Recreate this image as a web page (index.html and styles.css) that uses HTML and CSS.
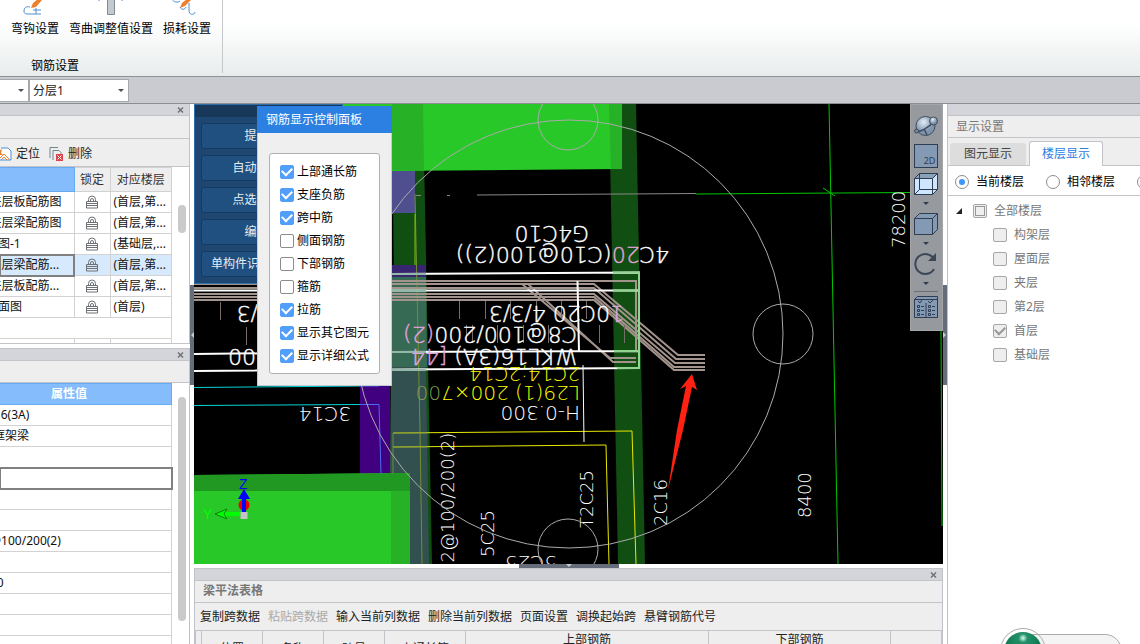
FILE: index.html
```html
<!DOCTYPE html>
<html lang="zh-CN">
<head>
<meta charset="utf-8">
<title>钢筋显示</title>
<link rel="stylesheet" href="styles.css">
</head>
<body>
<header class="ribbon">
  <div class="ribbon-group">
    <div class="ribbon-buttons">
      <button class="ribbon-btn"><svg width="32" height="15" viewBox="0 0 32 15"><path d="M11 7c-4-1-6 1-6 4s2 3 5 3h12M17 14V8M14 10h8" fill="none" stroke="#4a8fd6"/><path d="M12 8l2-5 5-4 4 1-6 7z" fill="#ee7f2d"/></svg><span>弯钩设置</span></button>
      <button class="ribbon-btn"><svg width="32" height="15" viewBox="0 0 32 15"><path d="M12.500-2h7v16.500h-7z" fill="#c3c9cc" stroke="#7f8c93"/><path d="M4 0v1M27 0v1" stroke="#4a8fd6"/></svg><span>弯曲调整值设置</span></button>
      <button class="ribbon-btn"><svg width="32" height="15" viewBox="0 0 32 15"><path d="M2 0c0 2 5 3 7 1M9 7c1 3 5 3 6 0M18 3v7c0 6 6 5 6 2" fill="none" stroke="#4a8fd6"/><path d="M9 8l2-5 5-4 4 1-6 6z" fill="#ee7f2d"/></svg><span>损耗设置</span></button>
    </div>
    <div class="ribbon-caption">钢筋设置</div>
  </div>
</header>
<div class="floorbar">
  <div class="combo combo-floor"><select aria-label="楼层"><option></option></select></div>
  <div class="combo combo-layer"><select aria-label="分层"><option>分层1</option></select></div>
</div>
<main class="workspace">
  <aside class="left">
    <section class="panel drawings">
      <div class="grip"><button class="close" aria-label="关闭"><svg width="8" height="8" viewBox="0 0 8 8"><use href="#cross"/></svg></button></div>
      <div class="spacer"></div>
      <div class="tools">
        <button class="tool"><svg class="tool-icon" width="16" height="16" viewBox="0 0 16 16"><path d="M5 2h7l3 3v9H2" fill="#fff" stroke="#4a8fd6"/><path d="M0 3l3 2 3-2-1 4 2 2H0z" fill="#ee7f2d"/><path d="M2 14l6-6 6 6M5 14l3-3 3 3" fill="none" stroke="#ee7f2d"/></svg>定位</button>
        <button class="tool"><svg class="tool-icon" width="16" height="16" viewBox="0 0 16 16"><path d="M2 12V1.500h8M5 14V4.500h6l2 2V8" fill="none" stroke="#6f858d"/><path d="M8 8h7v7H8z" fill="#d9434b"/><path d="M9.500 9.500l4 4M13.500 9.500l-4 4" stroke="#fff"/></svg>删除</button>
      </div>
      <div class="scroll-area drawings-area">
        <table class="grid drawing-grid">
          <colgroup><col class="c-name"><col class="c-lock"><col class="c-floor"></colgroup>
          <thead><tr><th class="blue"></th><th>锁定</th><th>对应楼层</th></tr></thead>
          <tbody>
            <tr><td>(夹层板配筋图</td><td class="lock"><svg viewBox="0 0 12 14"><use href="#lock"/></svg></td><td>(首层,第...</td></tr>
            <tr><td>(夹层梁配筋图</td><td class="lock"><svg viewBox="0 0 12 14"><use href="#lock"/></svg></td><td>(首层,第...</td></tr>
            <tr><td>面图-1</td><td class="lock"><svg viewBox="0 0 12 14"><use href="#lock"/></svg></td><td>(基础层,...</td></tr>
            <tr class="selected"><td>(夹层梁配筋...</td><td class="lock"><svg viewBox="0 0 12 14"><use href="#lock"/></svg></td><td>(首层,第...</td></tr>
            <tr><td>(夹层板配筋...</td><td class="lock"><svg viewBox="0 0 12 14"><use href="#lock"/></svg></td><td>(首层,第...</td></tr>
            <tr><td>平面图</td><td class="lock"><svg viewBox="0 0 12 14"><use href="#lock"/></svg></td><td>(首层)</td></tr>
            <tr><td colspan="3"></td></tr>
            <tr><td></td><td></td><td></td></tr>
          </tbody>
        </table>
        <div class="thumb thumb-short"></div>
      </div>
    </section>
    <section class="panel props">
      <div class="grip"><button class="close" aria-label="关闭"><svg width="8" height="8" viewBox="0 0 8 8"><use href="#cross"/></svg></button></div>
      <div class="spacer"></div>
      <div class="scroll-area">
        <table class="grid prop-grid">
          <thead><tr><th class="blue">属性值</th></tr></thead>
          <tbody>
            <tr><td>WKL16(3A)</td></tr>
            <tr><td>楼层框架梁</td></tr>
            <tr><td></td></tr>
            <tr class="editing"><td></td></tr>
            <tr><td></td></tr>
            <tr><td></td></tr>
            <tr><td>C10@100/200(2)</td></tr>
            <tr><td></td></tr>
            <tr><td>-0.300</td></tr>
            <tr><td></td></tr>
            <tr><td></td></tr>
            <tr><td></td></tr>
          </tbody>
        </table>
        <div class="thumb thumb-long"></div>
      </div>
    </section>
  </aside>
  <div class="splitter-v"><i class="handle"><svg width="4" height="6" viewBox="0 0 4 6"><path d="M4 0v6L1 3z" fill="#c4cbd3"/></svg></i></div>
  <div class="center">
    <div class="viewport">
      <svg class="scene" viewBox="194 104 749 460" preserveAspectRatio="xMinYMin slice" role="img" aria-label="三维视图">
        <rect x="194" y="104" width="749" height="460" fill="#000"/>
        <path d="M392 104H423L432 564H397z" fill="#114e11"/>
        <path d="M609 104H636L645 564H618z" fill="#114e11"/>
        <path d="M343 104H622V169L392 171H343z" fill="#28c828"/>
        <path d="M392 104H423L424 170H392zM609 104H622V169H611z" fill="#27b127"/>
        <path d="M391 171H415V213H391z" fill="#4f4f90"/>
        <path d="M391 265H426V277H391z" fill="#38256f"/>
        <path d="M360 385H390V475H360z" fill="#40007f"/>
        <path d="M391 277H426L427 367H391z" fill="#376a54"/>
        <path d="M391 367H426L429 564H389z" fill="#32504f"/>
        <path d="M194 475L410 473V564H194z" fill="#28c828"/>
        <path d="M194 475L410 473V491H194z" fill="#219821"/>
        <path d="M391 491H410V564H391z" fill="#27b127"/>
        <g fill="none" stroke="#888">
          <path d="M416 195.500h5M447 195.500h3M477 195L696 193.500"/>
          <path d="M696 194L910 192.500M829 104L838 564M941 331L942 526M823 188l12 8" stroke="#00c800"/>
        </g>
        <g fill="none" stroke="#00d5d5">
          <path d="M194 387.500L360 386M194 405.500L360 404.500"/>
          <path d="M360 386H379M360 404.500H379L381 474" stroke="#4a6cf0"/>
        </g>
        <path d="M415 194L420 430L422 564" fill="none" stroke="#709030"/>
        <path d="M415 214V265" stroke="#86c010"/>
        <g fill="none" stroke="#e8e800">
          <path d="M393 433L632 431L636 564M393 447L606 445L609 564"/>
          <path d="M393 433V474M393 433H427M393 447H427" stroke="#6f8a44"/>
        </g>
        <g fill="none" stroke="#a3938d" stroke-width="2">
          <path d="M194 281H636V290M194 284H594L678 355H705M194 288H594L676 359H705M194 294H594L675 363H705M194 297H594L674 367H705M194 300H594L674 370H705"/>
          <path d="M522 284L610 358H636M528 284L613 362H636"/>
          <path d="M636 290V350"/>
        </g>
        <g fill="none" stroke="#fff">
          <path d="M194 290.500H639M392 274L639 272.500V368L194 371M194 354L392 352L639 351" stroke-width="2"/>
          <path d="M577.500 281L579 352" stroke-width="2"/>
          <path d="M583 365L584 442"/>
          <path d="M613 290.500H639V351H614M613 272.500H639V368H617" stroke="#8fd48f" stroke-width="2"/>
          <path d="M392 290.500H426M392 274H426M392 352H426M392 370H426" stroke="#94b8a8" stroke-width="2"/>
        </g>
        <g stroke="#786c69" fill="none"><path d="M459.500 301v18M485.500 301v18M510.500 301v18M536.500 301v18M561.500 301v18M586.500 301v18M466.500 325v18M472.500 325v18M497.500 325v18M523.500 325v18M548.500 325v18M599.500 325v18M624.500 325v18M220.500 302v18M246.500 327v18"/></g>
        <g class="cad wide">
          <text transform="translate(589 226) rotate(180)">G4C10</text>
          <text transform="translate(669 247) rotate(180)">4C<tspan class="pink">20</tspan>(C10@100(2))</text>
          <text transform="translate(624 306) rotate(180)"><tspan class="pink">1</tspan>0C20 4/3/3</text>
          <text transform="translate(577 327) rotate(180)">C8@100/200<tspan class="pink">(2)</tspan></text>
          <text transform="translate(577 349) rotate(180)">WKL16(3A) <tspan class="pink">[44</tspan></text>
          <text transform="translate(272 306) rotate(180)">4/3</text>
          <text transform="translate(270 349) rotate(180)">100</text>
        </g>
        <g class="cad thin">
          <text class="yellow" transform="translate(580 367) rotate(180)">2C14;2C14</text>
          <text class="yellow" transform="translate(580 386) rotate(180)">L29(1) 200×7<tspan class="olive">00</tspan></text>
          <text transform="translate(580 406) rotate(180)">H-0.300</text>
          <text transform="translate(351 407) rotate(180)">3C14</text>
          <text transform="translate(557 556) rotate(180)">5C25</text>
        </g>
        <g class="cad narrow">
          <text transform="translate(454 574) rotate(-90)">12@100/200(2)</text>
          <text transform="translate(494 557) rotate(-90)">5C25</text>
          <text transform="translate(593 528) rotate(-90)">T2C25</text>
          <text transform="translate(667 526) rotate(-90)">2C16</text>
          <text transform="translate(811 518) rotate(-90)">8400</text>
          <text transform="translate(905 248) rotate(-90)">78200</text>
        </g>
        <g fill="none" stroke="#aaa"><circle cx="569" cy="334" r="214"/><circle cx="568" cy="120" r="30"/><circle cx="568" cy="549" r="30"/><circle cx="783" cy="334" r="30"/></g>
        <path d="M692 374L697 390L692 387L683 430L668 490L677 430L686 386L680 389z" fill="#ff2212"/>
        <circle cx="244" cy="505" r="5.500" fill="#f00000"/>
        <path d="M244 515V497" stroke="#0000ff" stroke-width="4"/><path d="M244 489L250 499H238z" fill="#0000ff"/>
        <path d="M240 514H222" stroke="#00ff00" stroke-width="4"/><path d="M215 514L227 509L224 514L227 519z" fill="#00ff00" stroke="#098009"/>
        <path d="M240.500 512h7v7h-7z" fill="#c4c4c4"/>
        <g class="axis"><text x="239" y="489" fill="#0000ff">Z</text><text x="203" y="519" fill="#00ff00">Y</text></g>
      </svg>
      <div class="recognize">
        <div class="recognize-head"></div>
        <button>提取边线</button>
        <button>自动提取梁线</button>
        <button>点选识别梁线</button>
        <button>编辑支座</button>
        <button>单构件识别(原位标注)</button>
      </div>
      <section class="dialog">
        <h2>钢筋显示控制面板</h2>
        <div class="options">
          <label><input type="checkbox" checked>上部通长筋</label>
          <label><input type="checkbox" checked>支座负筋</label>
          <label><input type="checkbox" checked>跨中筋</label>
          <label><input type="checkbox">侧面钢筋</label>
          <label><input type="checkbox">下部钢筋</label>
          <label><input type="checkbox">箍筋</label>
          <label><input type="checkbox" checked>拉筋</label>
          <label><input type="checkbox" checked>显示其它图元</label>
          <label><input type="checkbox" checked>显示详细公式</label>
        </div>
      </section>
      <div class="viewbar">
        <button aria-label="动态观察"><svg width="26" height="26" viewBox="0 0 26 26"><defs><radialGradient id="orb" cx=".4" cy=".3"><stop stop-color="#e3edf7"/><stop offset="1" stop-color="#7e94ad"/></radialGradient></defs><circle cx="12.500" cy="13" r="9.500" fill="url(#orb)" stroke="#3f4b5c"/><path d="M2 18c4 2 14-3 19-10M11 16l3 6" stroke="#3f4b5c" stroke-width="1.500" fill="none"/><circle cx="20.500" cy="8" r="4" fill="url(#orb)" stroke="#3f4b5c"/><circle cx="3.500" cy="18" r="2" fill="#7d8793" stroke="#3f4b5c"/></svg></button>
        <button aria-label="二维视图" class="two-d">2D</button>
        <button aria-label="线框"><svg width="26" height="26" viewBox="0 0 26 26"><path d="M1.500 7.500l5-5h18v16l-5 5h-18z" fill="#cfe6ff" stroke="#303d50"/><path d="M1.500 7.500l5-5h18l-5 5z" fill="#8ba0ba" stroke="#303d50"/><path d="M19.500 7.500v16M6.500 3v15.500h18M6.500 18.500l-5 5" fill="none" stroke="#303d50"/></svg></button>
        <span class="drop"></span>
        <button aria-label="实体"><svg width="26" height="26" viewBox="0 0 26 26"><path d="M1.500 7.500l5-5h18v16l-5 5h-18z" fill="#8499b3" stroke="#303d50"/><path d="M1.500 7.500h18l5-5M19.500 7.500v16" fill="none" stroke="#303d50"/></svg></button>
        <span class="drop"></span>
        <button aria-label="旋转"><svg width="26" height="26" viewBox="0 0 26 26"><path d="M21 18a10 10 0 1 1 0-10" fill="none" stroke="#3b4656" stroke-width="2"/><path d="M23 2v8h-8z" fill="#3b4656"/></svg></button>
        <span class="drop"></span>
        <hr>
        <button aria-label="显示设置"><svg width="26" height="26" viewBox="0 0 26 26"><path d="M1.500 5.500l3-3h20v21h-23z" fill="#8499b3" stroke="#303d50"/><path d="M1.500 5.500h23M13 9v14M5 7l2 2 2-3M15 7l2 2 3-3" fill="none" stroke="#303d50"/><path d="M4.500 11.500h2v2h-2zM4.500 15.500h2v2h-2zM4.500 19.500h2v2h-2zM15.500 11.500h2v2h-2zM15.500 15.500h2v2h-2zM15.500 19.500h2v2h-2zM8 12.500h3M8 16.500h3M8 20.500h3M19 12.500h3M19 16.500h3M19 20.500h3" fill="none" stroke="#303d50"/></svg></button>
      </div>
    </div>
    <div class="splitter-h"><i class="handle"><svg width="6" height="4" viewBox="0 0 6 4"><path d="M0 0h6L3 3z" fill="#c4cbd3"/></svg></i></div>
    <section class="panel beam">
      <div class="grip"><button class="close" aria-label="关闭"><svg width="8" height="8" viewBox="0 0 8 8"><use href="#cross"/></svg></button></div>
      <h2 class="panel-title">梁平法表格</h2>
      <div class="beam-tools">
        <button>复制跨数据</button><button disabled>粘贴跨数据</button><button>输入当前列数据</button><button>删除当前列数据</button><button>页面设置</button><button>调换起始跨</button><button>悬臂钢筋代号</button>
      </div>
      <table class="beam-grid">
        <colgroup><col class="b0"><col class="b1"><col class="b1"><col class="b1"><col class="b2"><col class="b3"><col class="b4"><col></colgroup>
        <thead>
          <tr><th rowspan="2"></th><th rowspan="2">位置</th><th rowspan="2">名称</th><th rowspan="2">跨号</th><th rowspan="2">上通长筋</th><th>上部钢筋</th><th>下部钢筋</th><th></th></tr>
          <tr><th></th><th></th><th></th></tr>
        </thead>
      </table>
    </section>
  </div>
  <div class="splitter-v"><i class="handle"><svg width="4" height="6" viewBox="0 0 4 6"><path d="M0 0v6l3-3z" fill="#c4cbd3"/></svg></i></div>
  <aside class="right">
    <div class="grip"></div>
    <h2 class="right-title">显示设置</h2>
    <div class="tabs"><button>图元显示</button><button class="active">楼层显示</button></div>
    <div class="scope">
      <label><input type="radio" name="scope" checked>当前楼层</label>
      <label><input type="radio" name="scope">相邻楼层</label>
      <label><input type="radio" name="scope" aria-label="自定义楼层"></label>
    </div>
    <div class="tree">
      <label class="root"><svg width="8" height="8" viewBox="0 0 8 8"><path d="M7 1v6H1z" fill="#222"/></svg><input type="checkbox" disabled class="partial">全部楼层</label>
      <label><input type="checkbox" disabled>构架层</label>
      <label><input type="checkbox" disabled>屋面层</label>
      <label><input type="checkbox" disabled>夹层</label>
      <label><input type="checkbox" disabled>第2层</label>
      <label><input type="checkbox" disabled checked>首层</label>
      <label><input type="checkbox" disabled>基础层</label>
    </div>
    <div class="assistant"><div class="assistant-pill"></div><div class="assistant-ball"></div></div>
  </aside>
</main>
<svg class="symbols" aria-hidden="true">
  <symbol id="lock" viewBox="0 0 12 14"><path d="M2.500 6V4.500a3.500 3.500 0 0 1 7 0V6M4.500 6V5a1.500 1.500 0 0 1 3 0v1M.500 6.500h11v6.500H.500zM1 8.500h10M1 10.500h10" fill="none" stroke="#6d7175"/></symbol>
  <symbol id="cross" viewBox="0 0 8 8"><path d="M1 1.500l5 5M6 1.500l-5 5" fill="none" stroke="#6f7276" stroke-width="1.500"/></symbol>
</svg>
</body>
</html>
```
FILE: styles.css
```css
* { box-sizing: border-box; }
body {
  margin: 0;
  height: 100vh;
  overflow: hidden;
  display: flex;
  flex-direction: column;
  font: 12px/16px "Noto Sans", "Noto Sans CJK SC", sans-serif;
  color: #222;
  background: #fff;
}
button, select, input { font: inherit; color: inherit; margin: 0; }
button { padding: 0; border: 0; background: none; white-space: nowrap; }
h2 { margin: 0; font-size: 12px; font-weight: 400; }
.symbols { position: absolute; width: 0; height: 0; }

.ribbon {
  height: 77px;
  flex: none;
  display: flex;
  background: linear-gradient(#fff 30%, #e8ecec);
  border-bottom: 1px solid #8b9396;
  color: #000;
}
.ribbon-group { width: 223px; height: 73px; padding-left: 11px; border-right: 1px solid #c4c8ca; }
.ribbon-buttons { display: flex; gap: 10px; }
.ribbon-btn { display: flex; flex-direction: column; align-items: center; gap: 6px; }
.ribbon-caption { margin: 21px 0 0 20px; }

.floorbar {
  height: 27px;
  flex: none;
  display: flex;
  padding-top: 2px;
  background: #c9cbd0;
  border-bottom: 1px solid #8b8e92;
}
.combo { position: relative; height: 23px; }
.combo-floor { width: 29px; }
.combo-layer { width: 100px; }
.combo select {
  appearance: none;
  width: 100%;
  height: 100%;
  padding: 0 3px;
  border: 1px solid #a6a8ac;
  border-radius: 0;
  background: #fff;
}
.combo-floor select { border-left: 0; }
.combo::after, .drop {
  content: "";
  border: 3px solid transparent;
  border-top-color: #4d5054;
  border-bottom: 0;
}
.combo::after { position: absolute; right: 5px; top: 10px; }

.workspace {
  flex: 1;
  min-height: 0;
  display: grid;
  grid-template-columns: 190px 4px minmax(0, 1fr) 4px 193px;
  grid-template-rows: minmax(0, 1fr);
}
.grip {
  height: 12px;
  flex: none;
  display: flex;
  align-items: center;
  justify-content: flex-end;
  padding-right: 4px;
  background: #d4d5da;
  border-bottom: 1px solid #c2c4c9;
}
.close svg { display: block; }
.panel { background: #eee; border-right: 1px solid #bfc2c8; overflow: hidden; }

.left { display: flex; flex-direction: column; gap: 4px; min-height: 0; }
.drawings { height: 240px; flex: none; border-bottom: 1px solid #c2c4c9; }
.props { flex: 1; border-top: 1px solid #c2c4c9; }
.spacer { height: 23px; border-bottom: 1px solid #c2c4c9; }
.props .spacer { height: 22px; }
.tools { height: 27px; padding-top: 2px; display: flex; gap: 8px; align-items: center; margin-left: -4px; }
.tool { display: flex; align-items: center; gap: 4px; }
.scroll-area { display: flex; background: #fff; border-top: 1px solid #c2c4c9; height: 100%; }
.props .scroll-area { border-top: 0; }
.grid { border-collapse: collapse; table-layout: fixed; width: 172px; flex: none; align-self: flex-start; color: #111; }
.grid td, .grid th {
  height: 21px;
  padding: 0 0 0 3px;
  border: 1px solid #d2d2d2;
  border-left: 0;
  white-space: nowrap;
  overflow: hidden;
  font-weight: 400;
}
.grid th { height: 24px; background: #eee; padding: 0; color: #333; }
.grid th.blue { background: #84bcfc; border-color: #66aaf2; color: #fff; font-weight: 700; }
.c-name { width: 74px; }
.c-lock { width: 36px; }
.drawing-grid td:first-child { text-indent: -17px; }
.drawing-grid .lock { padding: 0; text-align: center; }
.lock svg { width: 12px; height: 14px; display: block; margin: auto; }
.grid .selected td { background: #d7e9fc; }
.grid .selected td:first-child, .grid .editing td { outline: 2px solid #808080; outline-offset: -1px; }
.prop-grid td { text-indent: -34px; }
.prop-grid th.blue { height: 21px; padding-right: 84px; text-align: right; }
.thumb { width: 8px; margin-left: 6px; border-radius: 4px; background: #cacaca; }
.thumb-short { height: 28px; margin-top: 38px; }
.thumb-long { height: 224px; margin-top: 14px; }

.splitter-v { display: flex; align-items: flex-start; padding-top: 181px; }
.handle { display: grid; place-items: center; background: #646d79; }
.splitter-v .handle { width: 4px; height: 100px; }
.splitter-h { display: flex; justify-content: center; }
.splitter-h .handle { width: 100px; height: 4px; }
.handle svg { display: block; }

.center { display: grid; grid-template-rows: minmax(0, 1fr) 4px 76px; min-width: 0; }
.viewport { position: relative; overflow: hidden; background: #000; }
.scene { display: block; width: 100%; height: 100%; }
.cad { fill: #fff; }
.wide { font: 22px "DejaVu Sans", sans-serif; font-weight: 200; stroke: #fff; stroke-width: 0.4; }
.thin { font: 20px "DejaVu Sans", sans-serif; font-weight: 200; }
.narrow { font: 18px "DejaVu Sans", sans-serif; font-weight: 200; }
.axis { font: 14px "Liberation Sans", sans-serif; }
.pink { fill: #e0a3dc; stroke: #e0a3dc; }
.yellow { fill: #ffff00; }
.olive { fill: #7f9a54; }

.recognize {
  position: absolute;
  left: 0;
  top: 0;
  width: 149px;
  height: 180px;
  padding: 0 6px;
  display: flex;
  flex-direction: column;
  gap: 6px;
  background: #1d4672;
  border: 1px solid #2f6da9;
}
.recognize-head { height: 12px; margin: 0 -6px; background: #173858; flex: none; }
.recognize button {
  height: 26px;
  flex: none;
  background: #20507f;
  border: 1px solid #153a60;
  border-radius: 2px;
  color: #e6edf4;
}
.dialog { position: absolute; left: 63px; top: 2px; width: 135px; padding-bottom: 11px; background: #efefef; border: 1px solid #c2cbd3; border-top: 0; }
.dialog h2 { height: 27px; margin: 0 -1px; padding-left: 9px; line-height: 27px; background: #2b80e2; color: #fff; }
.options { margin: 20px 11px 0; padding: 6px 0 6px 10px; background: #fff; border: 1px solid #b1b1b1; border-radius: 3px; color: #000; }
.options label { display: flex; align-items: center; gap: 3px; height: 23px; white-space: nowrap; }
input[type="checkbox"], input[type="radio"] {
  appearance: none;
  width: 14px;
  height: 14px;
  flex: none;
  display: grid;
  place-items: center;
  border: 1px solid #8c8c8c;
  border-radius: 2px;
  background: #fff;
}
input[type="checkbox"]:checked { background: #519ffb; border-color: #519ffb; }
input[type="checkbox"]:checked::after {
  content: "";
  width: 8px;
  height: 5px;
  margin-top: -3px;
  border: solid #fff;
  border-width: 0 0 2px 2px;
  transform: rotate(-45deg);
}
input[type="checkbox"]:disabled { background: #eee; border-color: #a6a6a6; }
input[type="checkbox"]:disabled::after { border-color: #999; }
input.partial::after { content: ""; width: 8px; height: 8px; border: 1px solid #ccc; }
input[type="radio"] { border-radius: 50%; }
input[type="radio"]:checked::after { content: ""; width: 6px; height: 6px; border-radius: 50%; background: #3d96f8; }

.viewbar {
  position: absolute;
  right: 0;
  top: 0;
  width: 33px;
  height: 227px;
  padding: 8px 2px 0 0;
  display: flex;
  flex-direction: column;
  align-items: center;
  background: #96999e;
  border: 1px solid #a3a5a9;
}
.viewbar button, .viewbar svg { display: block; width: 26px; height: 26px; flex: none; }
.viewbar .two-d { width: 24px; height: 24px; margin: 5px 0 3px; padding: 9px 0 0 8px; background: #8499b3; border: 1px solid #303d50; font-size: 9px; line-height: 14px; color: #303d50; }
.drop { margin: 5px 0 6px; border-top-color: #303d50; }
.viewbar hr { width: 24px; margin: 0 0 2px; border: 0; border-top: 1px solid #6b6e73; }

.beam { border-left: 1px solid #bfc2c8; border-top: 1px solid #c2c4c9; }
.panel-title { height: 22px; padding-left: 8px; line-height: 20px; color: #777; font-weight: 700; border-bottom: 1px solid #c2c4c9; }
.beam-tools { height: 27px; padding-left: 5px; display: flex; align-items: center; gap: 8px; }
.beam-tools button:disabled { color: #aaa; }
.beam-grid { width: 100%; table-layout: fixed; border-collapse: collapse; }
.beam-grid th { height: 18px; padding: 0; border: 1px solid #c2c4c9; font-weight: 400; }
.b0 { width: 6px; }
.b1 { width: 61px; }
.b2 { width: 81px; }
.b3 { width: 243px; }
.b4 { width: 182px; }

.right { position: relative; overflow: hidden; border-left: 1px solid #bfc2c8; display: flex; flex-direction: column; }
.right-title { height: 22px; padding-left: 8px; line-height: 22px; color: #777; background: #eee; border-bottom: 1px solid #c2c4c9; }
.tabs { height: 28px; display: flex; align-items: flex-end; gap: 3px; padding-left: 2px; background: #eee; border-bottom: 1px solid #c2c4c9; }
.tabs button { width: 76px; height: 22px; background: #ddd; border-radius: 3px 3px 0 0; color: #444; }
.tabs .active { width: 74px; height: 25px; margin-bottom: -1px; background: #fff; border: 1px solid #c2c4c9; border-bottom: 0; color: #2b80e2; }
.scope { height: 30px; padding: 2px 0 0 7px; display: flex; align-items: center; gap: 22px; border-bottom: 1px solid #c2c4c9; color: #000; }
.scope label { display: flex; align-items: center; gap: 7px; flex: none; }
.tree { padding: 3px 0 0 45px; color: #777; }
.tree label { display: flex; align-items: center; gap: 7px; height: 24px; }
.tree .root { margin-left: -38px; }
.root svg { margin-right: 3px; }
.assistant { position: absolute; right: 0; bottom: -30px; width: 144px; height: 46px; }
.assistant-pill { position: absolute; left: 20px; top: 6px; width: 106px; height: 34px; border: 1px solid #aaa; border-radius: 17px; background: #f4f4f4; }
.assistant-ball { position: absolute; left: 4px; top: 0; width: 46px; height: 46px; border: 1px solid #aaa; border-radius: 50%; background: radial-gradient(circle at 50% 16%, #d8fff0 0, #22906a 12%, #087248 60%) content-box; padding: 3px; }
```
